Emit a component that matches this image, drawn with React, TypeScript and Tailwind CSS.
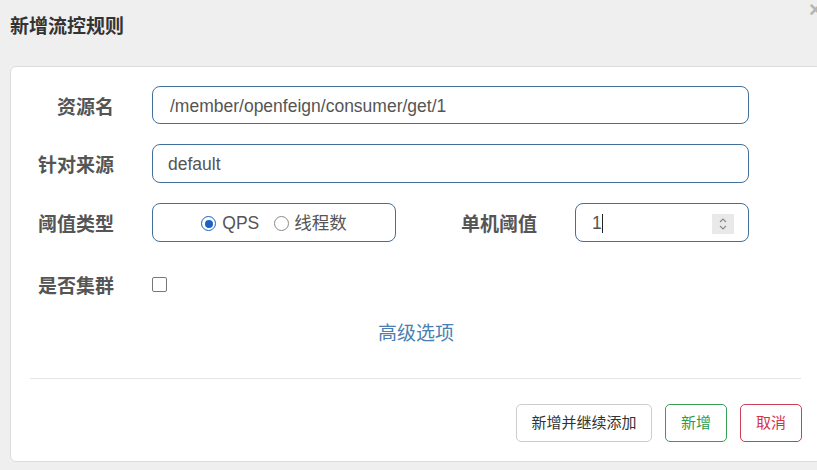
import React from "react";

const font = { fontFamily: '"Liberation Sans", "Noto Sans CJK SC", sans-serif' };

function Label({ children, w = "w-[84px]" }: { children: React.ReactNode; w?: string }) {
  return (
    <div className={`${w} shrink-0 text-right text-[19px] font-bold text-[#555] leading-[38px] pt-[5px]`}>
      {children}
    </div>
  );
}

export default function App() {
  return (
    <div className="relative w-[817px] h-[470px] overflow-hidden bg-[#efefef]" style={font}>
      <span className="absolute left-[809px] top-[-3px] text-[22px] font-bold text-[#b5b5b5] leading-[26px]">×</span>
      <div className="h-[66px] pl-[10px] pt-[16px]">
        <h1 className="text-[19px] font-bold text-[#333] leading-[22px]">新增流控规则</h1>
      </div>
      <div className="ml-[10px] w-[812px] h-[396px] bg-white border border-[#dcdcdc] rounded-[6px] px-[19px] pt-[19px]">
        <div className="flex items-center h-[38px]">
          <Label>资源名</Label>
          <div className="ml-[38px] w-[597px] h-[38px] border border-[#41709c] rounded-[8px] px-[17px] pt-[2px] flex items-center text-[17.5px] text-[#555]">
            /member/openfeign/consumer/get/1
          </div>
        </div>
        <div className="flex items-center h-[39px] mt-[20px]">
          <Label>针对来源</Label>
          <div className="ml-[38px] w-[597px] h-[39px] border border-[#41709c] rounded-[8px] px-[15px] pt-[2px] flex items-center text-[17.5px] text-[#555]">
            default
          </div>
        </div>
        <div className="flex items-center h-[39px] mt-[20px]">
          <Label>阈值类型</Label>
          <div className="ml-[38px] w-[244px] h-[39px] border border-[#41709c] rounded-[8px] pt-[2px] flex items-center justify-center text-[17.5px] text-[#555]">
            <span className="w-[15px] h-[15px] rounded-full border-[1.5px] border-[#1a62c4] flex items-center justify-center">
              <span className="w-[8px] h-[8px] rounded-full bg-[#1a62c4]" />
            </span>
            <span className="ml-[6px]">QPS</span>
            <span className="ml-[15px] w-[15px] h-[15px] rounded-full border-[1.5px] border-[#8a8a8a]" />
            <span className="ml-[5px]">线程数</span>
          </div>
          <Label w="w-[141px]">单机阈值</Label>
          <div className="ml-[38px] w-[174px] h-[39px] border border-[#41709c] rounded-[8px] pl-[16px] pr-[14px] pt-[2px] flex items-center text-[17.5px] text-[#555]">
            <span>1</span>
            <span className="w-px h-[19px] bg-[#222]" />
            <span className="ml-auto w-[22px] h-[20px] bg-[#e9e9e9] flex items-center justify-center">
              <svg width="10" height="14" viewBox="0 0 10 14" fill="none" stroke="#8a8a8a" strokeWidth="1.2">
                <path d="M2 5 L5 2 L8 5" />
                <path d="M2 9 L5 12 L8 9" />
              </svg>
            </span>
          </div>
        </div>
        <div className="flex items-center h-[38px] mt-[23px]">
          <Label>是否集群</Label>
          <div className="ml-[38px] w-[15px] h-[15px] border-[1.5px] border-[#777] rounded-[2px]" />
        </div>
        <div className="mt-[15px] flex justify-center">
          <span className="text-[19px] text-[#4a7fb5] leading-[32px]">高级选项</span>
        </div>
        <div className="mt-[28px] mr-[1px] border-t border-[#e5e5e5]" />
        <div className="mt-[25px] flex justify-end gap-[13px] text-[15px]">
          <button className="w-[136px] h-[38px] border border-[#cccccc] rounded-[5px] text-[#333]">新增并继续添加</button>
          <button className="w-[62px] h-[38px] border border-[#3a9d56] rounded-[5px] text-[#2e9c4c]">新增</button>
          <button className="w-[62px] h-[38px] border border-[#cf3d56] rounded-[5px] text-[#d5324e]">取消</button>
        </div>
      </div>
    </div>
  );
}
